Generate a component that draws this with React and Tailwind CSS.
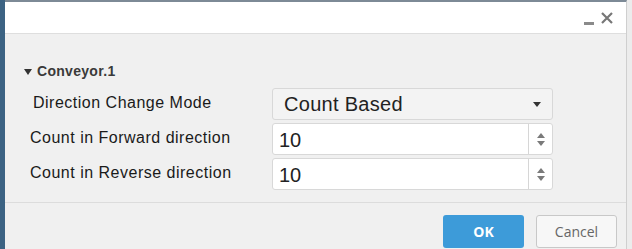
import React from "react";

function Spinner() {
  return (
    <div className="w-[24px] h-full border-l border-[#d6d6d6] flex flex-col items-center justify-center gap-[3px]">
      <svg width="8" height="5" viewBox="0 0 8 5"><path d="M0 5 L4 0 L8 5 Z" fill="#7a7a7a" /></svg>
      <svg width="8" height="5" viewBox="0 0 8 5"><path d="M0 0 L4 5 L8 0 Z" fill="#7a7a7a" /></svg>
    </div>
  );
}

function NumInput({ value }) {
  return (
    <div className="w-[281px] h-[32px] bg-white border border-[#d8d8d8] rounded-[3px] flex items-center">
      <div className="flex-1 pl-[6px] pt-[2px] text-[20px] text-[#222] leading-none">{value}</div>
      <Spinner />
    </div>
  );
}

export default function App() {
  return (
    <div
      className="w-[632px] h-[249px] flex bg-[#ececec] overflow-hidden"
      style={{ fontFamily: '"Liberation Sans", Arial, sans-serif' }}
    >
      <div className="w-[5px] h-full bg-[#3c6383]" />
      <div className="w-[622px] flex flex-col border-t-2 border-[#7d8a96] border-r border-r-[#cfcfcf] bg-[#f0f0f0]">
        <div className="h-[32px] bg-white border-b border-[#dedede] flex items-center justify-end pr-[13px] gap-[7px]">
          <div className="w-[10px] h-[3px] bg-[#8a8a8a] mt-[11px]" />
          <svg width="12" height="12" viewBox="0 0 12 12">
            <path d="M1 1 L11 11 M11 1 L1 11" stroke="#777" strokeWidth="2.2" />
          </svg>
        </div>
        <div className="flex-1 flex flex-col">
          <div className="flex items-center pl-[19px] pt-[29px] h-[46px]">
            <svg width="8" height="6" viewBox="0 0 8 6" className="mr-[5px]"><path d="M0 0 L8 0 L4 6 Z" fill="#333" /></svg>
            <span className="text-[14px] font-bold text-[#3a3a3a] tracking-[0.3px]">Conveyor.1</span>
          </div>
          <div className="flex mt-[8px]">
            <div className="w-[267px] flex flex-col text-[16px] tracking-[0.5px] text-[#1a1a1a]">
              <div className="h-[35px] flex items-center pl-[28px] pb-[5px]">Direction Change Mode</div>
              <div className="h-[35px] flex items-center pl-[25px] pb-[5px]">Count in Forward direction</div>
              <div className="h-[35px] flex items-center pl-[25px] pb-[5px]">Count in Reverse direction</div>
            </div>
            <div className="flex flex-col gap-[3px]">
              <div className="w-[281px] h-[32px] bg-[#f3f3f3] border border-[#d8d8d8] rounded-[3px] flex items-center justify-between pl-[11px] pr-[11px]">
                <span className="text-[20px] tracking-[0.3px] text-[#222] leading-none">Count Based</span>
                <svg width="8" height="5" viewBox="0 0 8 5"><path d="M0 0 L8 0 L4 5 Z" fill="#333" /></svg>
              </div>
              <NumInput value="10" />
              <NumInput value="10" />
            </div>
          </div>
          <div className="mt-[9px] border-t border-[#dcdcdc] flex-1 flex items-start justify-end pt-[12px] pr-[9px] gap-[12px]">
            <button
              className="w-[81px] h-[33px] bg-[#3d9bd9] rounded-[3px] text-white font-bold text-[14px]"
              style={{ fontFamily: '"Open Sans", sans-serif' }}
            >
              OK
            </button>
            <button
              className="w-[81px] h-[33px] bg-[#f7f7f7] border border-[#c8c8c8] rounded-[3px] text-[#666] text-[14px]"
              style={{ fontFamily: '"Open Sans", sans-serif' }}
            >
              Cancel
            </button>
          </div>
        </div>
      </div>
    </div>
  );
}
